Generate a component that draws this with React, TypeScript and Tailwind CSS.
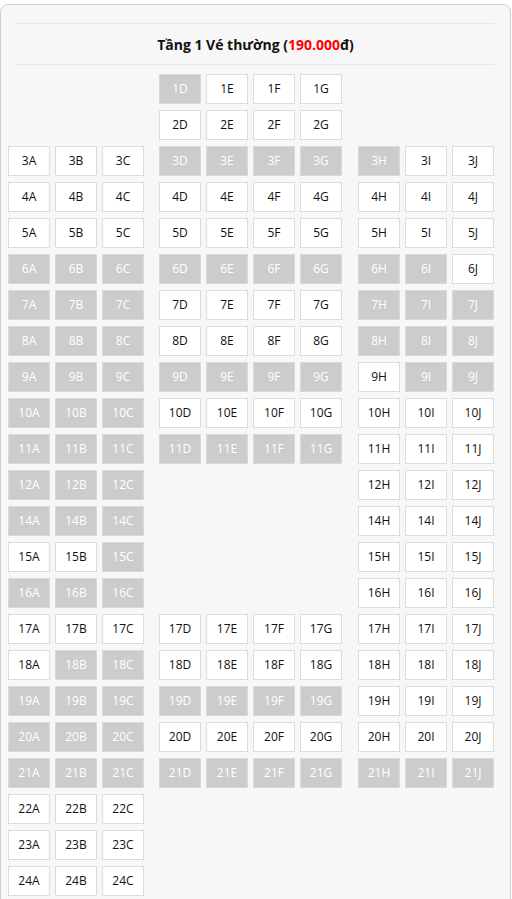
import React from "react";

type Seat = { id: string; booked: boolean } | null;

// rows with the letters of booked seats, per group (left A-C, middle D-G, right H-J)
const rows: { n: number; left?: string; mid?: string; right?: string; booked: string }[] = [
  { n: 1, mid: "DEFG", booked: "D" },
  { n: 2, mid: "DEFG", booked: "" },
  { n: 3, left: "ABC", mid: "DEFG", right: "HIJ", booked: "DEFGH" },
  { n: 4, left: "ABC", mid: "DEFG", right: "HIJ", booked: "" },
  { n: 5, left: "ABC", mid: "DEFG", right: "HIJ", booked: "" },
  { n: 6, left: "ABC", mid: "DEFG", right: "HIJ", booked: "ABCDEFGHI" },
  { n: 7, left: "ABC", mid: "DEFG", right: "HIJ", booked: "ABCHIJ" },
  { n: 8, left: "ABC", mid: "DEFG", right: "HIJ", booked: "ABCHIJ" },
  { n: 9, left: "ABC", mid: "DEFG", right: "HIJ", booked: "ABCDEFGIJ" },
  { n: 10, left: "ABC", mid: "DEFG", right: "HIJ", booked: "ABC" },
  { n: 11, left: "ABC", mid: "DEFG", right: "HIJ", booked: "ABCDEFG" },
  { n: 12, left: "ABC", right: "HIJ", booked: "ABC" },
  { n: 14, left: "ABC", right: "HIJ", booked: "ABC" },
  { n: 15, left: "ABC", right: "HIJ", booked: "C" },
  { n: 16, left: "ABC", right: "HIJ", booked: "ABC" },
  { n: 17, left: "ABC", mid: "DEFG", right: "HIJ", booked: "" },
  { n: 18, left: "ABC", mid: "DEFG", right: "HIJ", booked: "BC" },
  { n: 19, left: "ABC", mid: "DEFG", right: "HIJ", booked: "ABCDEFG" },
  { n: 20, left: "ABC", mid: "DEFG", right: "HIJ", booked: "ABC" },
  { n: 21, left: "ABC", mid: "DEFG", right: "HIJ", booked: "ABCDEFGHIJ" },
  { n: 22, left: "ABC", booked: "" },
  { n: 23, left: "ABC", booked: "" },
  { n: 24, left: "ABC", booked: "" },
];

function group(n: number, all: string, present: string | undefined, booked: string): Seat[] {
  return all.split("").map((c) =>
    present && present.includes(c) ? { id: `${n}${c}`, booked: booked.includes(c) } : null
  );
}

function SeatBox({ seat }: { seat: Seat }) {
  if (!seat) return <div className="w-[42px] h-[30px]" />;
  return (
    <div
      className={
        "w-[42px] h-[30px] flex items-center justify-center border text-[12px] " +
        (seat.booked
          ? "bg-[#cccccc] border-[#d9d9d9] text-white"
          : "bg-white border-[#dcdcdc] text-[#111]")
      }
    >
      {seat.id}
    </div>
  );
}

export default function App() {
  return (
    <div className="bg-white min-h-[899px] pt-[4px]" style={{ fontFamily: '"Open Sans", "Noto Sans", sans-serif' }}>
      <div className="w-[511px] bg-[#f7f7f7] border border-[#cfcfcf] rounded-lg pt-[18px] pb-[10px]">
        <div className="mx-[15px] border-t border-b border-[#e6e6e6] h-[42px] flex items-center justify-center">
          <span className="text-[14px] font-bold text-[#111]">
            Tầng 1 Vé thường (<span className="text-[#ff0000]">190.000</span>đ)
          </span>
        </div>
        <div className="mt-[9px] pl-[7px] flex flex-col gap-[6px]">
          {rows.map((r) => (
            <div key={r.n} className="flex">
              <div className="flex gap-[5px]">
                {group(r.n, "ABC", r.left, r.booked).map((s, i) => (
                  <SeatBox key={i} seat={s} />
                ))}
              </div>
              <div className="flex gap-[5px] ml-[15px]">
                {group(r.n, "DEFG", r.mid, r.booked).map((s, i) => (
                  <SeatBox key={i} seat={s} />
                ))}
              </div>
              <div className="flex gap-[5px] ml-[16px]">
                {group(r.n, "HIJ", r.right, r.booked).map((s, i) => (
                  <SeatBox key={i} seat={s} />
                ))}
              </div>
            </div>
          ))}
        </div>
      </div>
    </div>
  );
}
